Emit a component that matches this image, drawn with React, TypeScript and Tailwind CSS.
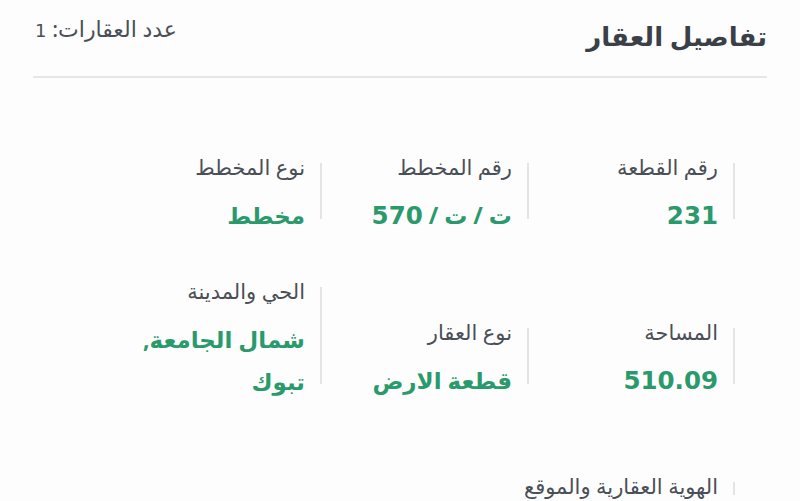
import React from "react";

type Item = { label: string; value: React.ReactNode };

function Num({ children }: { children: React.ReactNode }) {
  return (
    <span
      dir="ltr"
      className="text-[24.5px]"
      style={{ fontFamily: '"DejaVu Sans", sans-serif' }}
    >
      {children}
    </span>
  );
}

function Field({ label, value }: Item) {
  return (
    <div className="flex items-stretch">
      <div className="w-[2px] bg-[#e4e4e7] mt-[10px] mb-[18px] shrink-0" />
      <div className="pr-[15px] flex flex-col items-start">
        <div className="text-[21px] leading-[28px] text-[#4a4f57]">{label}</div>
        <div className="mt-[13px] text-[23px] leading-[43px] font-bold text-[#2a9a6c]">{value}</div>
      </div>
    </div>
  );
}

export default function App() {
  return (
    <div
      dir="rtl"
      className="w-[800px] h-[501px] overflow-hidden bg-[#fdfdfd] px-[33px]"
      style={{ fontFamily: '"Noto Sans", "DejaVu Sans", sans-serif' }}
    >
      <div className="flex items-start justify-between pt-[14px] pb-[18px]">
        <h1 className="text-[26px] leading-[44px] font-bold text-[#3a3f48]">تفاصيل العقار</h1>
        <div className="text-[22px] leading-[28px] text-[#4a4f57] pl-[2px]">
          عدد العقارات: <span style={{ fontFamily: '"DejaVu Sans", sans-serif' }} className="text-[18px]">1</span>
        </div>
      </div>
      <div className="h-[2px] bg-[#e6e6e9]" />
      <div className="mr-[32px] pt-[75px] grid grid-cols-[206px_207px_206px] items-end gap-y-[40px]">
        <Field label="رقم القطعة" value={<Num>231</Num>} />
        <Field label="رقم المخطط" value={<span>ت / ت / <Num>570</Num></span>} />
        <Field label="نوع المخطط" value="مخطط" />
        <Field label="المساحة" value={<Num>510.09</Num>} />
        <Field label="نوع العقار" value="قطعة الارض" />
        <Field
          label="الحي والمدينة"
          value={<span className="block w-[175px] leading-[42px]">شمال الجامعة, تبوك</span>}
        />
        <div className="col-span-3 mt-[30px]">
          <Field label="الهوية العقارية والموقع" value="" />
        </div>
      </div>
    </div>
  );
}
